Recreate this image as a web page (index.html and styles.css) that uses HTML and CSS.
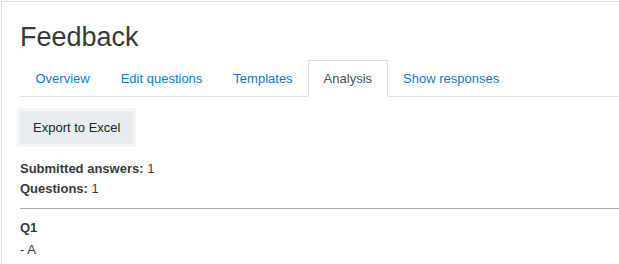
FILE: index.html
```html
<!DOCTYPE html>
<html lang="en">
<head>
    <meta charset="UTF-8">
    <meta name="viewport" content="width=device-width, initial-scale=1.0">
    <title>Feedback</title>
    <link rel="stylesheet" href="styles.css">
</head>
<body>
    <div class="page-card">
        <h2 class="page-title">Feedback</h2>

        <ul class="nav-tabs">
            <li><a href="#" class="tab-link">Overview</a></li>
            <li><a href="#" class="tab-link">Edit questions</a></li>
            <li><a href="#" class="tab-link">Templates</a></li>
            <li><a href="#" class="tab-link active">Analysis</a></li>
            <li><a href="#" class="tab-link">Show responses</a></li>
        </ul>

        <div class="export-row">
            <button type="button" class="btn-export">Export to Excel</button>
        </div>

        <div class="summary">
            <div><strong>Submitted answers:</strong> 1</div>
            <div><strong>Questions:</strong> 1</div>
        </div>

        <hr class="divider">

        <div class="question">
            <div class="question-label">Q1</div>
            <div class="question-answer">- A</div>
        </div>
    </div>
</body>
</html>
```

FILE: styles.css
```css
:root {
    --text-color: #373a3c;
    --link-color: #1177d1;
    --border-color: #dee2e6;
}

html {
    overflow: hidden;
}

body {
    font-family: 'Liberation Sans', Arial, sans-serif;
    font-size: 13px;
    line-height: 20px;
    color: var(--text-color);
    margin: 0;
    padding: 1px 0 0 1px;
    background-color: white;
}

.page-card {
    width: 700px;
    border-top: 1px solid var(--border-color);
    border-left: 1px solid var(--border-color);
    padding: 19px 0 20px 18px;
}

.page-title {
    font-size: 27px;
    font-weight: normal;
    line-height: 1.2;
    margin: 0 0 7px 0;
}

.nav-tabs {
    display: flex;
    list-style: none;
    margin: 0;
    padding: 0;
    border-bottom: 1px solid var(--border-color);
}

.tab-link {
    display: block;
    padding: 8px 14.5px;
    line-height: 19px;
    border: 1px solid transparent;
    margin-bottom: -1px;
    color: var(--link-color);
    text-decoration: none;
}

.tab-link.active {
    color: #495057;
    background-color: white;
    border-color: var(--border-color) var(--border-color) white;
}

.export-row {
    margin-top: 14px;
}

.btn-export {
    font-family: inherit;
    font-size: 13px;
    line-height: 19px;
    color: #212529;
    background-color: #e9ecef;
    border: 1px solid #e9ecef;
    border-radius: 0;
    padding: 6px 12px;
    box-shadow: 0 0 0 3px #f3f4f6;
    cursor: pointer;
}

.summary {
    margin-top: 15px;
}

.divider {
    border: none;
    border-top: 1px solid #aaa;
    margin: 9px 0;
}

.question-label {
    font-weight: bold;
    margin-bottom: 2px;
}
```
